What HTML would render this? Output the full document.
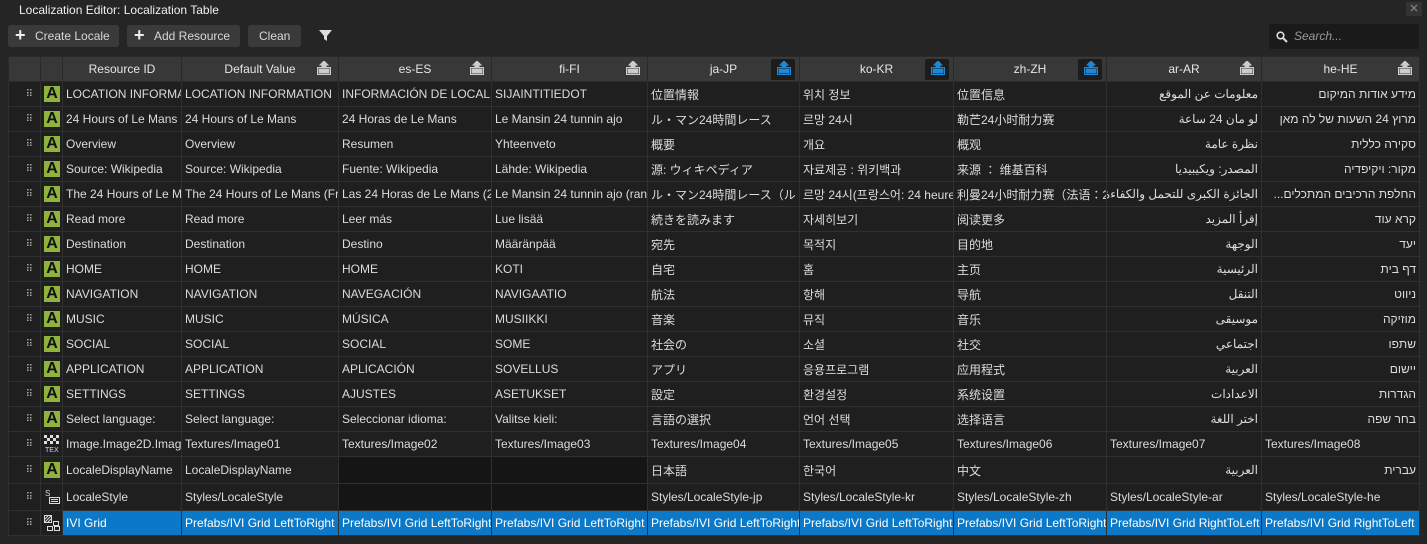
<!DOCTYPE html>
<html><head><meta charset="utf-8">
<style>
*{box-sizing:border-box;margin:0;padding:0}
body{width:1427px;height:544px;background:#252525;font-family:"Liberation Sans","Noto Sans CJK JP",sans-serif;font-size:12px;color:#dcdcdc;position:relative;overflow:hidden}
.title{position:absolute;left:19px;top:3px;font-size:12px;color:#f0f0f0}
.close{position:absolute;left:1406px;top:2px;width:16px;height:14px;background:#333;color:#777;font-size:11px;text-align:center;line-height:14px;font-weight:bold}
.btn{position:absolute;top:25px;height:22px;background:#3a3a3a;border-radius:3px;color:#d8d8d8;line-height:22px;font-size:12px}
.btn b{font-size:18px;font-weight:bold;position:absolute;left:7px;top:-1px;color:#eee}
.search{position:absolute;left:1269px;top:24px;width:150px;height:25px;background:#1a1a1a;border-radius:2px;color:#999;font-style:italic;line-height:25px;padding-left:25px}
table{position:absolute;left:8px;top:56px;border-collapse:collapse;table-layout:fixed;width:1411px}
td,th{border:1px solid #303030;height:25px;white-space:nowrap;overflow:hidden;padding:0 3px;background:#1f1f1f;font-weight:normal}
th{background:#383838;color:#e6e6e6;text-align:center;position:relative;border-color:#2a2a2a}
th svg{position:absolute;right:7px;top:4px}
th .bl{position:absolute;right:4px;top:2px;width:24px;height:21px;background:#1c1c1c;border-radius:2px}
th .bl svg{right:4px;top:2px}
td.d{text-align:right;padding-right:8px;color:#aaa;font-size:10px;letter-spacing:-1px}
td.i{padding:0 0 0 3px}
.A{display:inline-block;width:16px;height:16px;background:#8fb33c;color:#111;font-weight:bold;font-size:16px;line-height:16px;text-align:center;vertical-align:middle}
td.r{text-align:right;direction:rtl}
td.e{background:#151515}
tr.s td{background:#0b78c8;color:#fff;border-color:#303030}
tr.s td.d,tr.s td.i{background:#1f1f1f;color:#aaa}
</style></head><body>
<div class="title">Localization Editor: Localization Table</div>
<div class="close">✕</div>
<div class="btn" style="left:8px;width:111px;padding-left:27px"><b>+</b>Create Locale</div>
<div class="btn" style="left:127px;width:113px;padding-left:27px"><b>+</b>Add Resource</div>
<div class="btn" style="left:248px;width:53px;padding-left:11px">Clean</div>
<svg style="position:absolute;left:319px;top:29px" width="13" height="13" viewBox="0 0 13 13"><path d="M0 1h13L8 7v5L5 10V7z" fill="#ddd"/></svg>
<div class="search"><svg style="position:absolute;left:7px;top:7px" width="12" height="12" viewBox="0 0 12 12"><circle cx="4.5" cy="4.5" r="3.3" stroke="#ddd" stroke-width="1.6" fill="none"/><path d="M7 7l4 4" stroke="#ddd" stroke-width="2"/></svg>Search...</div>
<svg width="0" height="0" style="position:absolute"><defs>
<g id="k"><path d="M7 0L11 4H3z M5 4h4v2H5z"/><rect x="0.5" y="6.5" width="13" height="7" fill="none" stroke-width="1"/><rect x="2" y="8" width="10" height="4"/></g></defs></svg>
<table>
<colgroup><col style="width:32px"><col style="width:22px"><col style="width:119px"><col style="width:157px"><col style="width:153px"><col style="width:156px"><col style="width:152px"><col style="width:154px"><col style="width:153px"><col style="width:155px"><col style="width:158px"></colgroup>
<tr><th></th><th></th><th>Resource ID</th>
<th>Default Value<svg width="14" height="14"><use href="#k" fill="#ccc" stroke="#ccc"/></svg></th>
<th>es-ES<svg width="14" height="14"><use href="#k" fill="#ccc" stroke="#ccc"/></svg></th>
<th>fi-FI<svg width="14" height="14"><use href="#k" fill="#ccc" stroke="#ccc"/></svg></th>
<th>ja-JP<span class="bl"><svg width="14" height="14"><use href="#k" fill="#1e88d8" stroke="#1e88d8"/></svg></span></th>
<th>ko-KR<span class="bl"><svg width="14" height="14"><use href="#k" fill="#1e88d8" stroke="#1e88d8"/></svg></span></th>
<th>zh-ZH<span class="bl"><svg width="14" height="14"><use href="#k" fill="#1e88d8" stroke="#1e88d8"/></svg></span></th>
<th>ar-AR<svg width="14" height="14"><use href="#k" fill="#ccc" stroke="#ccc"/></svg></th>
<th>he-HE<svg width="14" height="14"><use href="#k" fill="#ccc" stroke="#ccc"/></svg></th></tr>
<tr><td class="d">⠿</td><td class="i"><span class="A">A</span></td><td>LOCATION INFORMATION</td><td>LOCATION INFORMATION</td><td>INFORMACIÓN DE LOCALIZACIÓN</td><td>SIJAINTITIEDOT</td><td>位置情報</td><td>위치 정보</td><td>位置信息</td><td class="r">معلومات عن الموقع</td><td class="r">מידע אודות המיקום</td></tr>
<tr><td class="d">⠿</td><td class="i"><span class="A">A</span></td><td>24 Hours of Le Mans</td><td>24 Hours of Le Mans</td><td>24 Horas de Le Mans</td><td>Le Mansin 24 tunnin ajo</td><td>ル・マン24時間レース</td><td>르망 24시</td><td>勒芒24小时耐力赛</td><td class="r">لو مان 24 ساعة</td><td class="r">מרוץ 24 השעות של לה מאן</td></tr>
<tr><td class="d">⠿</td><td class="i"><span class="A">A</span></td><td>Overview</td><td>Overview</td><td>Resumen</td><td>Yhteenveto</td><td>概要</td><td>개요</td><td>概观</td><td class="r">نظرة عامة</td><td class="r">סקירה כללית</td></tr>
<tr><td class="d">⠿</td><td class="i"><span class="A">A</span></td><td>Source: Wikipedia</td><td>Source: Wikipedia</td><td>Fuente: Wikipedia</td><td>Lähde: Wikipedia</td><td>源: ウィキペディア</td><td>자료제공 : 위키백과</td><td>来源 ： 维基百科</td><td class="r">المصدر: ويكيبيديا</td><td class="r">מקור: ויקיפדיה</td></tr>
<tr><td class="d">⠿</td><td class="i"><span class="A">A</span></td><td>The 24 Hours of Le Mans</td><td>The 24 Hours of Le Mans (French</td><td>Las 24 Horas de Le Mans (24</td><td>Le Mansin 24 tunnin ajo (ranskaksi</td><td>ル・マン24時間レース（ル・マン</td><td>르망 24시(프랑스어: 24 heures</td><td>利曼24小时耐力赛（法语：24</td><td class="r">الجائزة الكبرى للتحمل والكفاءة...</td><td class="r">החלפת הרכיבים המתכלים...</td></tr>
<tr><td class="d">⠿</td><td class="i"><span class="A">A</span></td><td>Read more</td><td>Read more</td><td>Leer más</td><td>Lue lisää</td><td>続きを読みます</td><td>자세히보기</td><td>阅读更多</td><td class="r">إقرأ المزيد</td><td class="r">קרא עוד</td></tr>
<tr><td class="d">⠿</td><td class="i"><span class="A">A</span></td><td>Destination</td><td>Destination</td><td>Destino</td><td>Määränpää</td><td>宛先</td><td>목적지</td><td>目的地</td><td class="r">الوجهة</td><td class="r">יעד</td></tr>
<tr><td class="d">⠿</td><td class="i"><span class="A">A</span></td><td>HOME</td><td>HOME</td><td>HOME</td><td>KOTI</td><td>自宅</td><td>홈</td><td>主页</td><td class="r">الرئيسية</td><td class="r">דף בית</td></tr>
<tr><td class="d">⠿</td><td class="i"><span class="A">A</span></td><td>NAVIGATION</td><td>NAVIGATION</td><td>NAVEGACIÓN</td><td>NAVIGAATIO</td><td>航法</td><td>항해</td><td>导航</td><td class="r">التنقل</td><td class="r">ניווט</td></tr>
<tr><td class="d">⠿</td><td class="i"><span class="A">A</span></td><td>MUSIC</td><td>MUSIC</td><td>MÚSICA</td><td>MUSIIKKI</td><td>音楽</td><td>뮤직</td><td>音乐</td><td class="r">موسيقى</td><td class="r">מוזיקה</td></tr>
<tr><td class="d">⠿</td><td class="i"><span class="A">A</span></td><td>SOCIAL</td><td>SOCIAL</td><td>SOCIAL</td><td>SOME</td><td>社会の</td><td>소셜</td><td>社交</td><td class="r">اجتماعي</td><td class="r">שתפו</td></tr>
<tr><td class="d">⠿</td><td class="i"><span class="A">A</span></td><td>APPLICATION</td><td>APPLICATION</td><td>APLICACIÓN</td><td>SOVELLUS</td><td>アプリ</td><td>응용프로그램</td><td>应用程式</td><td class="r">العربية</td><td class="r">יישום</td></tr>
<tr><td class="d">⠿</td><td class="i"><span class="A">A</span></td><td>SETTINGS</td><td>SETTINGS</td><td>AJUSTES</td><td>ASETUKSET</td><td>設定</td><td>환경설정</td><td>系统设置</td><td class="r">الاعدادات</td><td class="r">הגדרות</td></tr>
<tr><td class="d">⠿</td><td class="i"><span class="A">A</span></td><td>Select language:</td><td>Select language:</td><td>Seleccionar idioma:</td><td>Valitse kieli:</td><td>言語の選択</td><td>언어 선택</td><td>选择语言</td><td class="r">اختر اللغة</td><td class="r">בחר שפה</td></tr>
<tr><td class="d">⠿</td><td class="i"><svg width="16" height="18" viewBox="0 0 16 18" style="vertical-align:middle"><g fill="#ddd"><rect x="0" y="0" width="3" height="3"/><rect x="6" y="0" width="3" height="3"/><rect x="12" y="0" width="3" height="3"/><rect x="3" y="3" width="3" height="3"/><rect x="9" y="3" width="3" height="3"/><rect x="0" y="6" width="3" height="3"/><rect x="6" y="6" width="3" height="3"/><rect x="12" y="6" width="3" height="3"/></g><text x="1" y="17" font-size="7" fill="#ddd" font-family="Liberation Sans">TEX</text></svg></td><td>Image.Image2D.Image</td><td>Textures/Image01</td><td>Textures/Image02</td><td>Textures/Image03</td><td>Textures/Image04</td><td>Textures/Image05</td><td>Textures/Image06</td><td>Textures/Image07</td><td>Textures/Image08</td></tr>
<tr style="height:27px"><td class="d">⠿</td><td class="i"><span class="A">A</span></td><td>LocaleDisplayName</td><td>LocaleDisplayName</td><td class="e"></td><td class="e"></td><td>日本語</td><td>한국어</td><td>中文</td><td class="r">العربية</td><td class="r">עברית</td></tr>
<tr style="height:27px"><td class="d">⠿</td><td class="i"><svg width="16" height="16" viewBox="0 0 16 16" style="vertical-align:middle"><text x="1" y="7" font-size="8" fill="#ddd" font-family="Liberation Sans">S</text><rect x="5.5" y="8.5" width="10" height="6" fill="none" stroke="#ddd"/><path d="M7 10.5h7M7 12.5h7" stroke="#ddd"/></svg></td><td>LocaleStyle</td><td>Styles/LocaleStyle</td><td class="e"></td><td class="e"></td><td>Styles/LocaleStyle-jp</td><td>Styles/LocaleStyle-kr</td><td>Styles/LocaleStyle-zh</td><td>Styles/LocaleStyle-ar</td><td>Styles/LocaleStyle-he</td></tr>
<tr class="s"><td class="d">⠿</td><td class="i"><svg width="16" height="16" viewBox="0 0 16 16" style="vertical-align:middle"><rect x="0.5" y="0.5" width="7" height="7" fill="none" stroke="#ddd"/><path d="M1 7L7 1M1 4L4 1M4 7L7 4" stroke="#ddd"/><rect x="9.5" y="6.5" width="5" height="4" fill="none" stroke="#ddd"/><rect x="3.5" y="11.5" width="5" height="4" fill="none" stroke="#ddd"/><rect x="10.5" y="11.5" width="5" height="4" fill="none" stroke="#ddd"/></svg></td><td>IVI Grid</td><td>Prefabs/IVI Grid LeftToRight</td><td>Prefabs/IVI Grid LeftToRight</td><td>Prefabs/IVI Grid LeftToRight</td><td>Prefabs/IVI Grid LeftToRight</td><td>Prefabs/IVI Grid LeftToRight</td><td>Prefabs/IVI Grid LeftToRight</td><td>Prefabs/IVI Grid RightToLeft</td><td>Prefabs/IVI Grid RightToLeft</td></tr>
</table>
</body></html>
